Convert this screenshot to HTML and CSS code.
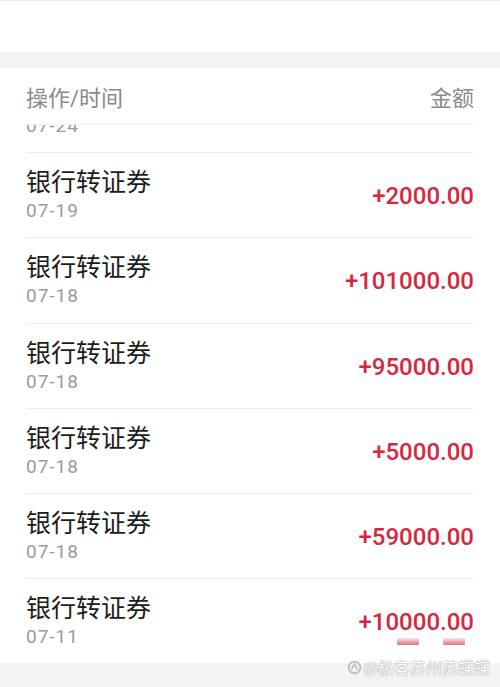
FILE: index.html
```
<!DOCTYPE html>
<html lang="zh-CN">
<head>
    <meta charset="UTF-8">
    <meta name="viewport" content="width=device-width, initial-scale=1.0">
    <title>资金流水</title>
    <link rel="stylesheet" href="styles.css">
</head>
<body>
    <div class="top-bar"></div>
    <div class="band"></div>

    <div class="card">
        <div class="list-head">
            <span>操作/时间</span>
            <span>金额</span>
        </div>

        <div class="list">
            <div class="row first">
                <div class="info">
                    <div class="title">银行转证券</div>
                    <div class="date">07-24</div>
                </div>
                <div class="amount">+3000.00</div>
            </div>
            <div class="row">
                <div class="info">
                    <div class="title">银行转证券</div>
                    <div class="date">07-19</div>
                </div>
                <div class="amount">+2000.00</div>
            </div>
            <div class="row">
                <div class="info">
                    <div class="title">银行转证券</div>
                    <div class="date">07-18</div>
                </div>
                <div class="amount">+101000.00</div>
            </div>
            <div class="row">
                <div class="info">
                    <div class="title">银行转证券</div>
                    <div class="date">07-18</div>
                </div>
                <div class="amount">+95000.00</div>
            </div>
            <div class="row">
                <div class="info">
                    <div class="title">银行转证券</div>
                    <div class="date">07-18</div>
                </div>
                <div class="amount">+5000.00</div>
            </div>
            <div class="row">
                <div class="info">
                    <div class="title">银行转证券</div>
                    <div class="date">07-18</div>
                </div>
                <div class="amount">+59000.00</div>
            </div>
            <div class="row last">
                <div class="info">
                    <div class="title">银行转证券</div>
                    <div class="date">07-11</div>
                </div>
                <div class="amount">+10000.00
                    <span class="smudge s1"></span>
                    <span class="smudge s2"></span>
                </div>
            </div>
        </div>
    </div>

    <div class="footer-band">
        <span class="watermark">
            <svg class="wm-logo" width="15" height="15" viewBox="0 0 14 14">
                <circle cx="7" cy="7" r="5.5" fill="none" stroke="#bbb" stroke-width="1.6"/>
                <path d="M4 9 L7 4 L10 9" fill="none" stroke="#bbb" stroke-width="1.4"/>
            </svg>@极客苏州苏蝶蝶</span>
    </div>
</body>
</html>
```

FILE: styles.css
```
* {
    box-sizing: border-box;
    margin: 0;
    padding: 0;
}

body {
    width: 500px;
    height: 687px;
    overflow: hidden;
    background: #fff;
    font-family: Roboto, "Noto Sans CJK SC", sans-serif;
}

.top-bar {
    height: 52px;
    background: #fff;
    border-top: 1px solid #ececec;
}

.band {
    height: 16px;
    background: #f4f4f4;
}

.card {
    background: #fff;
    padding: 0 26px;
}

.list-head {
    display: flex;
    justify-content: space-between;
    align-items: center;
    height: 57px;
    font-size: 22px;
    color: #8a8a8a;
    border-bottom: 1px solid #f0f0f0;
    position: relative;
    z-index: 1;
    background: #fff;
    margin-bottom: -1px;
}

.list {
    height: 539px;
    overflow: hidden;
}

.row {
    display: flex;
    justify-content: space-between;
    align-items: center;
    padding: 15px 0 13.3px;
    border-bottom: 1px solid #ececec;
}

.row.first {
    margin-top: -56.3px;
}

.row.last {
    border-bottom: none;
}

.title {
    font-size: 25px;
    line-height: 30px;
    color: #1c1c1c;
}

.date {
    font-size: 19px;
    line-height: 26px;
    letter-spacing: 1px;
    color: #9a9a9a;
}

.amount {
    position: relative;
    font-size: 24px;
    font-weight: 500;
    color: #d6273f;
}

.smudge {
    position: absolute;
    top: 30px;
    height: 7px;
    background: linear-gradient(#fbe3e7, #e0707f);
    border-radius: 1px;
}

.s1 {
    left: 38px;
    width: 22px;
}

.s2 {
    left: 84px;
    width: 22px;
}

.footer-band {
    height: 24px;
    background: #f3f3f3;
    display: flex;
    justify-content: flex-end;
    align-items: flex-start;
    padding-right: 10px;
}

.watermark {
    display: flex;
    align-items: center;
    gap: 2px;
    margin-top: -8px;
    font-size: 16px;
    color: #fff;
    text-shadow: 0 0 1px #999, 0 0 1px #999;
}
```
